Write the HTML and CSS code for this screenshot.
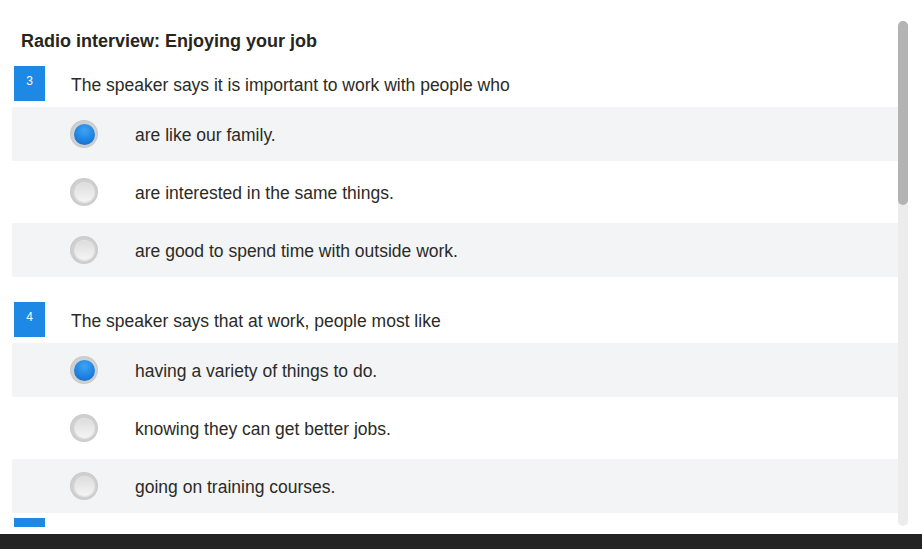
FILE: index.html
```html
<!DOCTYPE html>
<html lang="en">
<head>
<meta charset="utf-8">
<title>Radio interview: Enjoying your job</title>
<link rel="stylesheet" href="styles.css">
</head>
<body>
<div class="page">
  <div class="main">
    <div class="scroller">
      <h1 class="title">Radio interview: Enjoying your job</h1>

      <section class="question">
        <div class="q-head">
          <span class="badge">3</span>
          <p class="q-text">The speaker says it is important to work with people who</p>
        </div>
        <ul class="options">
          <li class="option shaded"><span class="radio checked"></span><span class="opt-text">are like our family.</span></li>
          <li class="option"><span class="radio"></span><span class="opt-text">are interested in the same things.</span></li>
          <li class="option shaded"><span class="radio"></span><span class="opt-text">are good to spend time with outside work.</span></li>
        </ul>
      </section>

      <section class="question">
        <div class="q-head">
          <span class="badge">4</span>
          <p class="q-text">The speaker says that at work, people most like</p>
        </div>
        <ul class="options">
          <li class="option shaded"><span class="radio checked"></span><span class="opt-text">having a variety of things to do.</span></li>
          <li class="option"><span class="radio"></span><span class="opt-text">knowing they can get better jobs.</span></li>
          <li class="option shaded"><span class="radio"></span><span class="opt-text">going on training courses.</span></li>
        </ul>
      </section>

      <section class="question">
        <div class="q-head">
          <span class="badge"></span>
        </div>
      </section>
    </div>
    <div class="scrollbar"><div class="thumb"></div></div>
  </div>
  <div class="footer"></div>
</div>
</body>
</html>
```

FILE: styles.css
```css
* { box-sizing: border-box; }
html, body {
  margin: 0;
  padding: 0;
  background: #fff;
  font-family: "Liberation Sans", Arial, sans-serif;
  color: #2b2b26;
}
.page {
  width: 922px;
  height: 549px;
  display: flex;
  flex-direction: column;
}
.main {
  height: 534px;
  display: flex;
  padding-top: 20px;
  padding-bottom: 7px;
}
.scroller {
  width: 898px;
  padding-left: 12px;
  overflow: hidden;
}
.title {
  margin: 11px 0 0 9px;
  font-size: 18px;
  line-height: 21px;
  font-weight: bold;
  color: #26261c;
}
.question { margin-top: 14px; }
.question + .question { margin-top: 25px; }
.question:last-child { margin-top: 5px; }
.q-head {
  display: flex;
  align-items: center;
  height: 35px;
}
.badge {
  width: 31px;
  height: 35px;
  margin-left: 2px;
  background: #1e88e5;
  color: #fff;
  font-size: 12px;
  line-height: 14px;
  text-align: center;
  padding-top: 8px;
}
.q-text {
  margin: 0 0 0 26px;
  font-size: 17.5px;
  line-height: 20px;
  padding-top: 2px;
}
.options {
  list-style: none;
  margin: 6px 0 0 0;
  padding: 0;
  display: flex;
  flex-direction: column;
  gap: 4px;
}
.option {
  height: 54px;
  display: flex;
  align-items: center;
  padding-left: 58px;
  font-size: 17.5px;
}
.option.shaded { background: #f3f4f6; }
.opt-text { margin-left: 37px; padding-top: 2px; }
.radio {
  width: 28px;
  height: 28px;
  border-radius: 50%;
  flex: none;
  background: radial-gradient(circle, #d0d0d0 60%, #c4c4c4 80%, #dadada 100%);
  display: flex;
  align-items: center;
  justify-content: center;
}
.radio::after {
  content: "";
  width: 21px;
  height: 21px;
  border-radius: 50%;
  background: linear-gradient(#dcdcdc, #f6f6f6);
  box-shadow: inset 0 0 0 1px #e2e2e2;
}
.radio.checked::after {
  width: 21px;
  height: 21px;
  background: radial-gradient(circle at 50% 30%, #3fa3f3 0%, #1f84e2 55%, #1662c4 100%);
  box-shadow: none;
}
.scrollbar {
  width: 10px;
  margin-top: 1px;
  height: 505px;
  border-radius: 5px;
  background: #ececec;
}
.thumb {
  height: 184px;
  border-radius: 5px;
  background: #b3b3b3;
}
.footer {
  height: 15px;
  background: #232323;
}
```
